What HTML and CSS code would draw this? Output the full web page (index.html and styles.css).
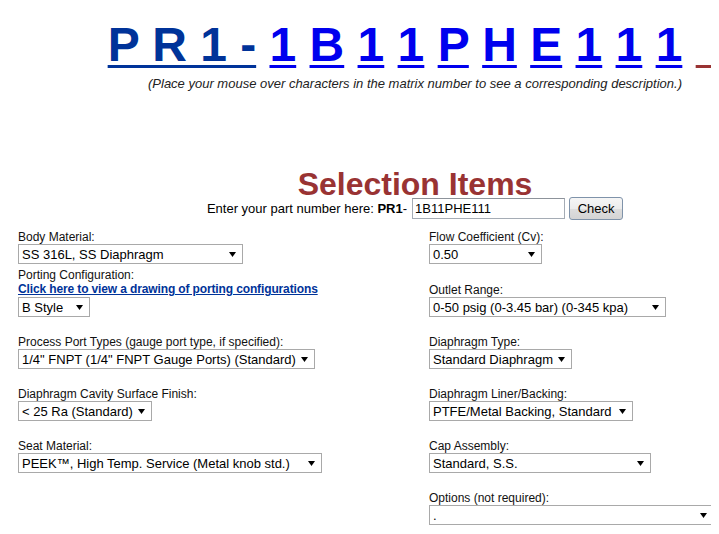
FILE: index.html
```html
<!DOCTYPE html>
<html lang="en">
<head>
<meta charset="utf-8">
<title>PR1 Matrix Selection</title>
<link rel="stylesheet" href="styles.css">
</head>
<body>
<div class="page">
  <div class="matrix"><a class="base" href="#">P R 1 -</a> <a class="ch" href="#">1</a> <a class="ch" href="#">B</a> <a class="ch" href="#">1</a> <a class="ch" href="#">1</a> <a class="ch" href="#">P</a> <a class="ch" href="#">H</a> <a class="ch" href="#">E</a> <a class="ch" href="#">1</a> <a class="ch" href="#">1</a> <a class="ch" href="#">1</a> <a class="tail" href="#">&nbsp;&nbsp;</a></div>
  <p class="hint">(Place your mouse over characters in the matrix number to see a corresponding description.)</p>

  <h1 class="title">Selection Items</h1>
  <form class="entry">
    <span>Enter your part number here: <b>PR1</b>-</span>
    <input class="part" type="text" value="1B11PHE111">
    <button class="check" type="button">Check</button>
  </form>

  <div class="grid">
    <div class="field first">
      <label>Body Material:</label>
      <span class="sel"><select class="w-body"><option>SS 316L, SS Diaphragm</option></select><svg viewBox="0 0 7 5" width="7" height="5"><polygon points="0,0 7,0 3.5,5"/></svg></span>
    </div>
    <div class="field first right">
      <label>Flow Coefficient (Cv):</label>
      <span class="sel"><select class="w-cv"><option>0.50</option></select><svg viewBox="0 0 7 5" width="7" height="5"><polygon points="0,0 7,0 3.5,5"/></svg></span>
    </div>

    <div class="field">
      <label>Porting Configuration:</label>
      <a class="drawing" href="#">Click here to view a drawing of porting configurations</a>
      <span class="sel"><select class="w-port"><option>B Style</option></select><svg viewBox="0 0 7 5" width="7" height="5"><polygon points="0,0 7,0 3.5,5"/></svg></span>
    </div>
    <div class="field right">
      <label>Outlet Range:</label>
      <span class="sel"><select class="w-outlet"><option>0-50 psig (0-3.45 bar) (0-345 kpa)</option></select><svg viewBox="0 0 7 5" width="7" height="5"><polygon points="0,0 7,0 3.5,5"/></svg></span>
    </div>

    <div class="field">
      <label>Process Port Types (gauge port type, if specified):</label>
      <span class="sel"><select class="w-process"><option>1/4" FNPT (1/4" FNPT Gauge Ports) (Standard)</option></select><svg viewBox="0 0 7 5" width="7" height="5"><polygon points="0,0 7,0 3.5,5"/></svg></span>
    </div>
    <div class="field right">
      <label>Diaphragm Type:</label>
      <span class="sel"><select class="w-dtype"><option>Standard Diaphragm</option></select><svg viewBox="0 0 7 5" width="7" height="5"><polygon points="0,0 7,0 3.5,5"/></svg></span>
    </div>

    <div class="field">
      <label>Diaphragm Cavity Surface Finish:</label>
      <span class="sel"><select class="w-finish"><option>&lt; 25 Ra (Standard)</option></select><svg viewBox="0 0 7 5" width="7" height="5"><polygon points="0,0 7,0 3.5,5"/></svg></span>
    </div>
    <div class="field right">
      <label>Diaphragm Liner/Backing:</label>
      <span class="sel"><select class="w-liner"><option>PTFE/Metal Backing, Standard</option></select><svg viewBox="0 0 7 5" width="7" height="5"><polygon points="0,0 7,0 3.5,5"/></svg></span>
    </div>

    <div class="field">
      <label>Seat Material:</label>
      <span class="sel"><select class="w-seat"><option>PEEK™, High Temp. Service (Metal knob std.)</option></select><svg viewBox="0 0 7 5" width="7" height="5"><polygon points="0,0 7,0 3.5,5"/></svg></span>
    </div>
    <div class="field right">
      <label>Cap Assembly:</label>
      <span class="sel"><select class="w-cap"><option>Standard, S.S.</option></select><svg viewBox="0 0 7 5" width="7" height="5"><polygon points="0,0 7,0 3.5,5"/></svg></span>
    </div>

    <div class="field empty"></div>
    <div class="field right">
      <label>Options (not required):</label>
      <span class="sel"><select class="w-options"><option>.</option></select><svg viewBox="0 0 7 5" width="7" height="5"><polygon points="0,0 7,0 3.5,5"/></svg></span>
    </div>
  </div>
</div>
</body>
</html>
```

FILE: styles.css
```css
html {
  overflow: hidden;
  background: #ffffff;
}

body {
  margin: 8px;
  font-family: "Liberation Sans", Arial, sans-serif;
  color: #000000;
}

.page {
  width: 814px;
}

.matrix {
  margin: 9px 0 0;
  text-align: center;
  white-space: nowrap;
  font-size: 48px;
  font-weight: bold;
  line-height: 55px;
}

.matrix a {
  text-decoration: underline;
  text-decoration-thickness: 3px;
  text-underline-offset: 4px;
}

.matrix .base {
  color: #003399;
}

.matrix .ch {
  color: #0000ee;
}

.matrix .tail {
  color: #993333;
}

.hint {
  margin: 4px 0 0;
  text-align: center;
  font-size: 13px;
  font-style: italic;
  line-height: 15px;
  color: #222222;
}

.title {
  margin: 80px 0 0;
  text-align: center;
  font-size: 32px;
  font-weight: bold;
  line-height: 26px;
  color: #993333;
}

.entry {
  margin: 0;
  display: flex;
  justify-content: center;
  align-items: center;
  gap: 4px;
  font-size: 13px;
}

.entry span {
  margin-right: 1px;
}

.part {
  box-sizing: border-box;
  width: 153px;
  height: 21px;
  margin: 0;
  padding: 1px 2px;
  border: 1px solid #a5acb5;
  border-top-color: #8d939b;
  font-family: "Liberation Sans", Arial, sans-serif;
  font-size: 13px;
  color: #000000;
}

.check {
  box-sizing: border-box;
  width: 54px;
  height: 23px;
  margin: 0;
  padding: 0;
  border: 1px solid #7f93aa;
  border-radius: 3px;
  background: linear-gradient(#f6f6f6, #ececec 50%, #dedede 50%, #d4d4d4);
  font-family: "Liberation Sans", Arial, sans-serif;
  font-size: 13px;
  color: #000000;
}

.grid {
  margin-top: 10px;
  padding-left: 10px;
  display: grid;
  grid-template-columns: 411px 1fr;
}

.field {
  display: flex;
  flex-direction: column;
  align-items: flex-start;
  padding-bottom: 18px;
  font-size: 12px;
  line-height: 14px;
  color: #111111;
}

.field.first {
  padding-bottom: 4px;
}

.field.right {
  align-self: end;
}

.field label {
  display: block;
}

.drawing {
  font-weight: bold;
  color: #003399;
  text-decoration: underline;
  letter-spacing: -0.13px;
  line-height: 15px;
}

.sel {
  display: inline-grid;
}

.sel select,
.sel svg {
  grid-area: 1 / 1;
}

.sel select {
  appearance: none;
  -webkit-appearance: none;
  box-sizing: border-box;
  height: 20px;
  margin: 0;
  padding: 0 0 0 3px;
  border: 1px solid #a9a9a9;
  border-radius: 0;
  background: #ffffff;
  font-family: "Liberation Sans", Arial, sans-serif;
  font-size: 13px;
  color: #000000;
}

.sel svg {
  justify-self: end;
  align-self: center;
  margin-right: 7px;
  fill: #000000;
  pointer-events: none;
}

.w-body { width: 225px; }
.w-port { width: 72px; }
.w-process { width: 297px; }
.w-finish { width: 134px; }
.w-seat { width: 304px; }
.w-cv { width: 113px; }
.w-outlet { width: 237px; }
.w-dtype { width: 143px; }
.w-liner { width: 204px; }
.w-cap { width: 222px; }
.w-options { width: 285px; }
```
